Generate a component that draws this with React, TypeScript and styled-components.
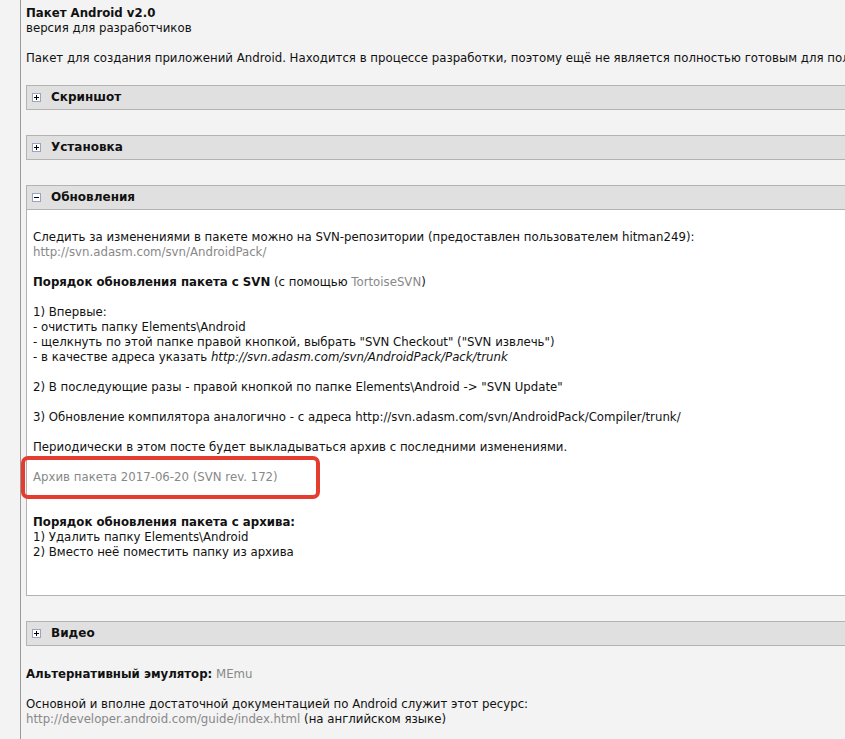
import React from "react";
import styled, { createGlobalStyle } from "styled-components";

const GlobalStyle = createGlobalStyle`
  html, body {
    margin: 0;
    padding: 0;
    overflow: hidden;
    background: #f3f3f3;
  }
  body {
    font-family: "DejaVu Sans", Verdana, sans-serif;
    font-size: 11.75px;
    line-height: 15px;
    color: #111;
  }
`;

const Page = styled.div`
  display: flex;
  width: 1100px;
  min-height: 739px;
`;

const Gutter = styled.div`
  flex: 0 0 20px;
  border-right: 1px solid #9a9a9a;
`;

const Content = styled.div`
  flex: 1;
  padding: 6px 0 0 5px;
`;

const Title = styled.div`
  font-weight: bold;
`;

const Para = styled.div<{ gap?: number }>`
  margin-top: ${(p) => p.gap ?? 0}px;
  white-space: nowrap;
`;

const Link = styled.span`
  color: #888;
`;

const Spoiler = styled.div<{ gap: number }>`
  margin-top: ${(p) => p.gap}px;
`;

const SpoilerHead = styled.div`
  display: flex;
  align-items: center;
  gap: 10px;
  height: 23px;
  padding-left: 5px;
  background: #e0e0e0;
  border: 1px solid #b3b3b3;
  font-weight: bold;
  font-size: 12px;
`;

const Toggle = styled.span`
  display: flex;
  align-items: center;
  justify-content: center;
  width: 9px;
  height: 9px;
  box-sizing: border-box;
  background: #fff;
  border: 1px solid #9aa3c4;
`;

const SpoilerBody = styled.div`
  background: #fff;
  border: 1px solid #b3b3b3;
  border-top: none;
  padding: 5px 6px 5px 6px;
`;

const Blank = styled.div<{ lines?: number }>`
  height: ${(p) => (p.lines ?? 1) * 15}px;
`;

const ArchiveLine = styled.div`
  position: relative;
`;

const Highlight = styled.span`
  position: absolute;
  left: -12px;
  top: -14px;
  width: 299px;
  height: 43px;
  box-sizing: border-box;
  border: 4px solid #e43d30;
  border-radius: 7px;
  pointer-events: none;
`;

const Footer = styled.div`
  margin-top: 21px;
`;

const ToggleIcon = ({ open }: { open?: boolean }) => (
  <Toggle>
    <svg width="7" height="7" viewBox="0 0 7 7">
      <rect x="1" y="3" width="5" height="1" fill="#000" />
      {!open && <rect x="3" y="1" width="1" height="5" fill="#000" />}
    </svg>
  </Toggle>
);

const SpoilerHeader = ({ title, open }: { title: string; open?: boolean }) => (
  <SpoilerHead>
    <ToggleIcon open={open} />
    <span>{title}</span>
  </SpoilerHead>
);

export default function App() {
  return (
    <>
      <GlobalStyle />
      <Page>
        <Gutter />
        <Content>
          <Title>Пакет Android v2.0</Title>
          <Para>версия для разработчиков</Para>
          <Para gap={15}>
            Пакет для создания приложений Android. Находится в процессе разработки, поэтому ещё не является полностью готовым для полноценного использования.
          </Para>

          <Spoiler gap={19}>
            <SpoilerHeader title="Скриншот" />
          </Spoiler>
          <Spoiler gap={25}>
            <SpoilerHeader title="Установка" />
          </Spoiler>
          <Spoiler gap={25}>
            <SpoilerHeader title="Обновления" open />
            <SpoilerBody>
              <Blank />
              <div>
                Следить за изменениями в пакете можно на SVN-репозитории (предоставлен пользователем hitman249):
              </div>
              <Link>http://svn.adasm.com/svn/AndroidPack/</Link>
              <Blank />
              <div>
                <b>Порядок обновления пакета с SVN</b> (с помощью <Link>TortoiseSVN</Link>)
              </div>
              <Blank />
              <div>1) Впервые:</div>
              <div>- очистить папку Elements\Android</div>
              <div>- щелкнуть по этой папке правой кнопкой, выбрать "SVN Checkout" ("SVN извлечь")</div>
              <div>
                - в качестве адреса указать <i>http://svn.adasm.com/svn/AndroidPack/Pack/trunk</i>
              </div>
              <Blank />
              <div>2) В последующие разы - правой кнопкой по папке Elements\Android -&gt; "SVN Update"</div>
              <Blank />
              <div>3) Обновление компилятора аналогично - с адреса http://svn.adasm.com/svn/AndroidPack/Compiler/trunk/</div>
              <Blank />
              <div>Периодически в этом посте будет выкладываться архив с последними изменениями.</div>
              <Blank />
              <ArchiveLine>
                <Link>Архив пакета 2017-06-20 (SVN rev. 172)</Link>
                <Highlight />
              </ArchiveLine>
              <Blank lines={2} />
              <div>
                <b>Порядок обновления пакета с архива:</b>
              </div>
              <div>1) Удалить папку Elements\Android</div>
              <div>2) Вместо неё поместить папку из архива</div>
              <Blank lines={2} />
            </SpoilerBody>
          </Spoiler>
          <Spoiler gap={25}>
            <SpoilerHeader title="Видео" />
          </Spoiler>

          <Footer>
            <b>Альтернативный эмулятор:</b> <Link>MEmu</Link>
          </Footer>
          <Blank />
          <div>Основной и вполне достаточной документацией по Android служит этот ресурс:</div>
          <div>
            <Link>http://developer.android.com/guide/index.html</Link> (на английском языке)
          </div>
        </Content>
      </Page>
    </>
  );
}
